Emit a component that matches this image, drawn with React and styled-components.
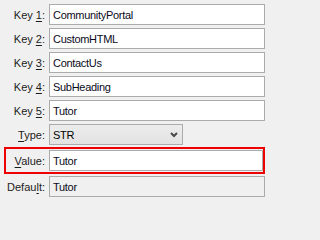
import React from "react";
import styled, { createGlobalStyle } from "styled-components";

const GlobalStyle = createGlobalStyle`
  html, body {
    margin: 0;
    padding: 0;
    background: #f0f0f0;
  }
  body {
    font-family: "Liberation Sans", Arial, sans-serif;
    font-size: 11px;
    color: #000;
  }
`;

const Panel = styled.div`
  display: flex;
  flex-direction: column;
  width: 266px;
  height: 202px;
  padding: 4px 1px 0 0;
  box-sizing: border-box;
  overflow: hidden;
`;

const Row = styled.div`
  display: flex;
  align-items: center;
  gap: 4px;
  margin-top: ${p => p.$top || 0}px;
`;

const HighlightRow = styled(Row)`
  margin-left: 4px;
  padding: 1px 0;
  border: 2px solid #ee0000;
`;

const Label = styled.label`
  width: ${p => p.$width || 45}px;
  flex: none;
  text-align: right;
  white-space: nowrap;
  color: #1c1c1c;

  u {
    text-decoration: underline;
    text-underline-offset: 2px;
  }
`;

const Field = styled.div`
  flex: 1;
  height: 21px;
  box-sizing: border-box;
  display: flex;
  align-items: center;
  padding: 0 3px;
  border: 1px solid #ababab;
  background: ${p => (p.$disabled ? "#f0f0f0" : "#fff")};
  color: #0a0a1a;
  letter-spacing: -0.3px;
  white-space: nowrap;
  overflow: hidden;
`;

const Select = styled.div`
  width: 134px;
  height: 21px;
  box-sizing: border-box;
  display: flex;
  align-items: center;
  justify-content: space-between;
  padding: 0 4px 0 3px;
  border: 1px solid #acacac;
  background: linear-gradient(#ececec, #e3e3e3);
  letter-spacing: -0.3px;
`;

const Chevron = () => (
  <svg width="8" height="6" viewBox="0 0 8 6">
    <path d="M1 1 L4 4 L7 1" fill="none" stroke="#4a4a4a" strokeWidth="2" />
  </svg>
);

const keys = ["CommunityPortal", "CustomHTML", "ContactUs", "SubHeading", "Tutor"];

export default function App() {
  return (
    <>
      <GlobalStyle />
      <Panel>
        {keys.map((k, i) => (
          <Row key={k} $top={i === 0 ? 0 : 3}>
            <Label>
              Key <u>{i + 1}</u>:
            </Label>
            <Field>{k}</Field>
          </Row>
        ))}
        <Row $top={3}>
          <Label>
            <u>T</u>ype:
          </Label>
          <Select>
            STR
            <Chevron />
          </Select>
        </Row>
        <HighlightRow $top={2}>
          <Label $width={39}>
            <u>V</u>alue:
          </Label>
          <Field>Tutor</Field>
        </HighlightRow>
        <Row $top={2}>
          <Label>
            Defau<u>l</u>t:
          </Label>
          <Field $disabled>Tutor</Field>
        </Row>
      </Panel>
    </>
  );
}
